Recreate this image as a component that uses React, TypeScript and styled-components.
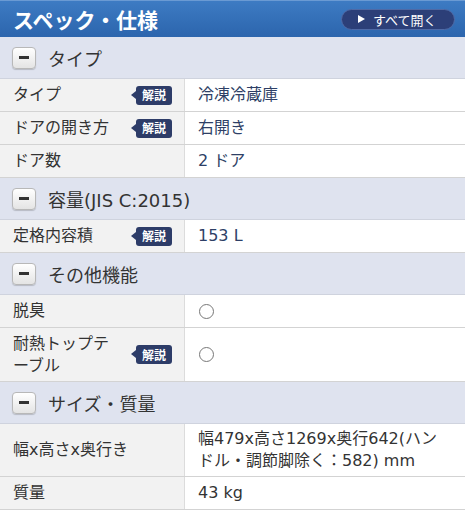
import React from "react";
import styled, { createGlobalStyle } from "styled-components";

const Global = createGlobalStyle`
  html, body { margin: 0; padding: 0; background: #ffffff; }
  body { font-family: "DejaVu Sans", "Noto Sans CJK JP", sans-serif; }
`;

const Page = styled.div`
  width: 465px;
  background: #fff;
`;

const Header = styled.div`
  height: 37px;
  box-sizing: border-box;
  display: flex;
  align-items: center;
  justify-content: space-between;
  padding: 0 10px 0 13px;
  background: linear-gradient(#3d7bc3, #2c65ad);
  border-top: 1px solid #6a9ad3;
`;

const Title = styled.h1`
  margin: 0;
  font-family: "Noto Sans CJK JP", sans-serif;
  font-size: 21px;
  font-weight: 700;
  color: #fff;
  line-height: 1;
`;

const OpenAll = styled.button`
  display: flex;
  align-items: center;
  gap: 8px;
  height: 21px;
  width: 114px;
  box-sizing: border-box;
  padding: 0 0 0 16px;
  border-radius: 11px;
  border: 1px solid #4f6aa6;
  background: #2c3f78;
  color: #fff;
  font-family: "Noto Sans CJK JP", sans-serif;
  font-size: 13px;
  line-height: 1;
`;

const Triangle = styled.span`
  width: 0;
  height: 0;
  border-left: 7px solid #fff;
  border-top: 4.5px solid transparent;
  border-bottom: 4.5px solid transparent;
`;

const SectionHead = styled.div`
  height: 42px;
  box-sizing: border-box;
  display: flex;
  align-items: center;
  gap: 12px;
  padding-left: 12px;
  background: #dfe3ef;
  border-bottom: 1px solid #cfd3de;
  font-size: 18px;
  color: #333;
`;

const MinusBox = styled.span`
  width: 24px;
  height: 22px;
  box-sizing: border-box;
  border: 1px solid #b8b8b8;
  border-radius: 4px;
  background: linear-gradient(#ffffff, #e4e4e4);
  box-shadow: 0 1px 1px rgba(0, 0, 0, 0.18);
  display: flex;
  align-items: center;
  justify-content: center;
  &::after {
    content: "";
    width: 10px;
    height: 3px;
    background: #333;
  }
`;

const Row = styled.div<{ $h?: number }>`
  display: grid;
  grid-template-columns: 185px 1fr;
  min-height: ${(p) => p.$h ?? 33}px;
  border-bottom: 1px solid #d3d3d3;
  box-sizing: border-box;
`;

const Label = styled.div`
  background: #f2f2f2;
  border-right: 1px solid #dcdcdc;
  display: flex;
  align-items: center;
  justify-content: space-between;
  padding: 0 12px 0 13px;
  font-size: 16px;
  line-height: 22px;
  color: #333;
`;

const Value = styled.div<{ $link?: boolean }>`
  background: #fff;
  display: flex;
  align-items: center;
  padding: 0 8px 0 13px;
  font-size: 16px;
  line-height: 22px;
  color: ${(p) => (p.$link ? "#2e3f66" : "#333")};
`;

const Badge = styled.span`
  position: relative;
  width: 36px;
  height: 19px;
  border-radius: 3px;
  background: #2d3c68;
  color: #fff;
  font-family: "Noto Sans CJK JP", sans-serif;
  font-size: 12px;
  font-weight: 700;
  line-height: 1;
  display: flex;
  align-items: center;
  justify-content: center;
  flex-shrink: 0;
  &::before {
    content: "";
    position: absolute;
    left: -5px;
    top: 5px;
    border-right: 5px solid #2d3c68;
    border-top: 4.5px solid transparent;
    border-bottom: 4.5px solid transparent;
  }
`;

const Circle = styled.span`
  width: 13px;
  height: 13px;
  border: 1.3px solid #777;
  border-radius: 50%;
  margin-left: 1px;
`;

type Item = {
  label: React.ReactNode;
  value: React.ReactNode;
  badge?: boolean;
  link?: boolean;
  h?: number;
};

type Section = { title: string; items: Item[] };

const sections: Section[] = [
  {
    title: "タイプ",
    items: [
      { label: "タイプ", value: "冷凍冷蔵庫", badge: true, link: true },
      { label: "ドアの開き方", value: "右開き", badge: true, link: true },
      { label: "ドア数", value: "2 ドア", link: true },
    ],
  },
  {
    title: "容量(JIS C:2015)",
    items: [{ label: "定格内容積", value: "153 L", badge: true, link: true }],
  },
  {
    title: "その他機能",
    items: [
      { label: "脱臭", value: <Circle /> },
      {
        label: (
          <>
            耐熱トップテ
            <br />
            ーブル
          </>
        ),
        value: <Circle />,
        badge: true,
        h: 54,
      },
    ],
  },
  {
    title: "サイズ・質量",
    items: [
      {
        label: "幅x高さx奥行き",
        value: (
          <>
            幅479x高さ1269x奥行642(ハン
            <br />
            ドル・調節脚除く：582) mm
          </>
        ),
        h: 53,
      },
      { label: "質量", value: "43 kg" },
    ],
  },
];

export default function App() {
  return (
    <Page>
      <Global />
      <Header>
        <Title>スペック・仕様</Title>
        <OpenAll>
          <Triangle />
          すべて開く
        </OpenAll>
      </Header>
      {sections.map((s) => (
        <React.Fragment key={s.title}>
          <SectionHead>
            <MinusBox />
            {s.title}
          </SectionHead>
          {s.items.map((it, i) => (
            <Row key={i} $h={it.h}>
              <Label>
                <span>{it.label}</span>
                {it.badge && <Badge>解説</Badge>}
              </Label>
              <Value $link={it.link}>{it.value}</Value>
            </Row>
          ))}
        </React.Fragment>
      ))}
    </Page>
  );
}
